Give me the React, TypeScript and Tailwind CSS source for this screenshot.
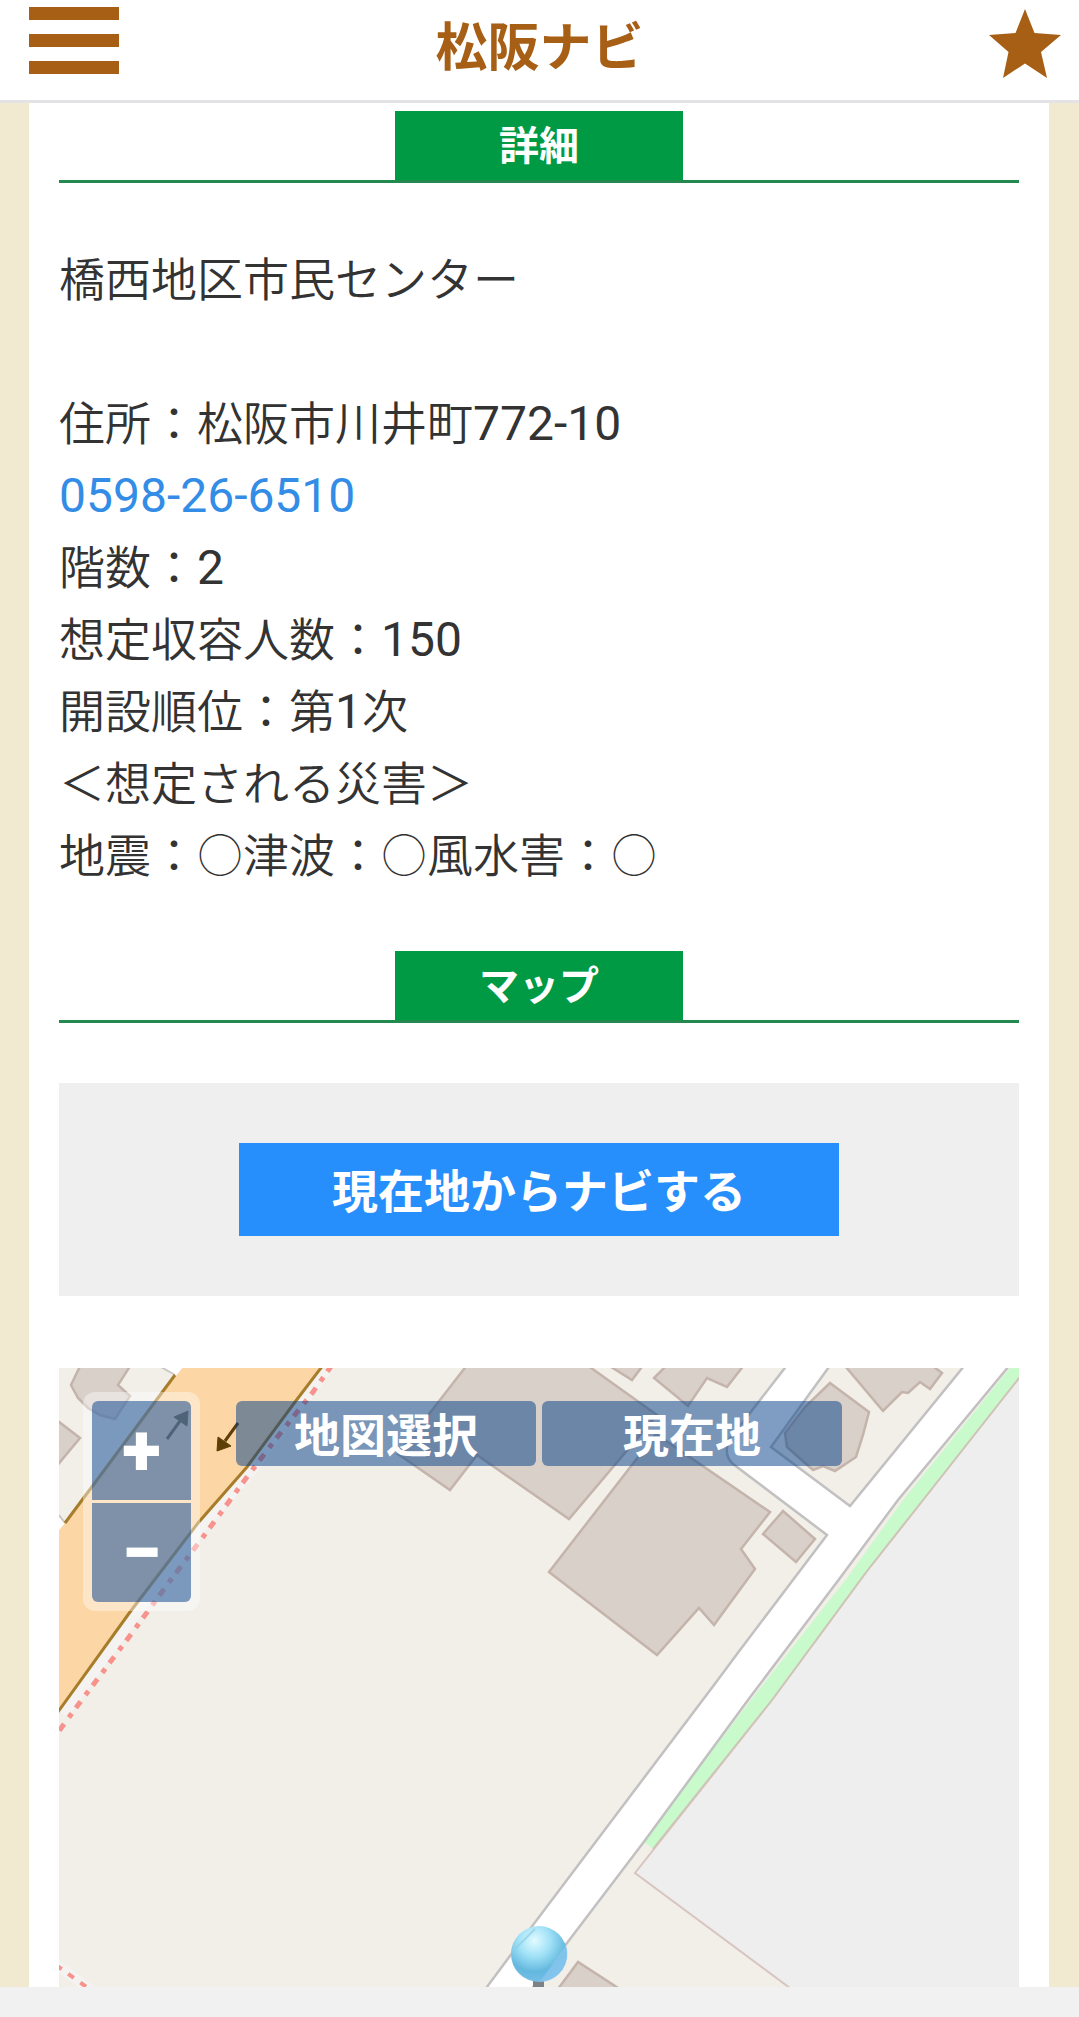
import React from "react";

const buildings = [
  "83,1360 71,1385 78,1398 88,1408 100,1415 115,1419 130,1396 118,1385 134,1360",
  "50,1415 80,1438 50,1474",
  "471,1360 398,1454 450,1490 477,1455 569,1519 657,1415 580,1360",
  "549,1572 656,1434 770,1512 741,1549 755,1569 714,1625 699,1608 657,1655",
  "783,1511 815,1539 796,1562 763,1534",
  "600,1360 632,1380 647,1360",
  "672,1360 654,1378 688,1406 707,1378 727,1387 748,1360",
  "830,1383 869,1412 863,1435 856,1457 835,1471 823,1466 813,1470 787,1447 785,1433 805,1407",
  "840,1360 883,1411 902,1392 908,1393 920,1382 930,1389 942,1373 925,1360",
  "578,1962 552,1997 632,1997",
];

function MapCanvas() {
  return (
    <svg
      className="block h-full w-full"
      viewBox="59 1368 960 619"
      preserveAspectRatio="xMidYMin slice"
      role="img"
      aria-label="周辺地図"
    >
      <defs>
        <radialGradient id="pin" cx="0.42" cy="0.26" r="0.8">
          <stop offset="0" stopColor="#e2fbff" />
          <stop offset="0.35" stopColor="#a2e2f7" />
          <stop offset="0.7" stopColor="#63b8de" />
          <stop offset="1" stopColor="#7cc0ea" />
        </radialGradient>
      </defs>
      <rect x="50" y="1360" width="980" height="640" fill="#f2efe9" />

      {/* open ground east of the road */}
      <path
        d="M1030 1364 L923 1500 L867 1571 L772 1700 L635 1873 L802 1997 L1030 1997 Z"
        fill="#eeeeee"
        stroke="#d8c4c0"
        strokeWidth="2"
      />
      <path
        d="M1010 1368 L1030 1350 L1030 1364 L923 1500 L867 1571 L772 1700 L653 1849 L643 1841 L751 1700 L847 1578 L903 1500 Z"
        fill="#c8facc"
      />
      <path d="M1030 1364 L923 1500 L867 1571 L772 1700 L653 1849" fill="none" stroke="#cfc4b6" strokeWidth="2" />

      {buildings.map((points) => (
        <polygon key={points} points={points} fill="#d9d0c9" stroke="#c4b4ab" strokeWidth="2.5" />
      ))}

      {/* side street and main street */}
      <path
        d="M969 1360 L850 1506 L771 1447 L834 1360 L791 1360 L750 1413 L729 1440 Q723 1455 733 1464 L827 1535 L740 1650 L714 1685 L533 1925 L478 1999 L524 1999 L567 1943 L643 1843 L748 1700 L837 1582 L898 1500 L1014 1360 Z"
        fill="#ffffff"
        stroke="#c2c0c1"
        strokeWidth="2.5"
      />

      {/* trunk road */}
      <path d="M321 1368 L295 1402 L247 1467 L198 1523 L130 1612 L59 1711" fill="none" stroke="#f5f3f1" strokeWidth="22" />
      <path d="M150 1360 L195 1360 L175 1377 L161 1367 Z M50 1508 L65 1523 L50 1550 Z" fill="#ffffff" />
      <path d="M189 1360 L327 1360 L295 1402 L247 1467 L198 1523 L130 1612 L50 1723 L50 1541 L65 1523 L175 1377 Z" fill="#fcd6a4" />
      <path d="M161 1367 L175 1375 M59 1515 L65 1523" stroke="#cbc7c5" strokeWidth="2" />
      <path
        d="M175 1375 L65 1523 M327 1360 L295 1402 L247 1467 L198 1523 L130 1612 L50 1723"
        fill="none"
        stroke="#a77d2b"
        strokeWidth="3"
      />
      <path
        d="M332 1365 L313 1392 L275 1440 L247 1477 L203 1537 L167 1585 L132 1633 L78 1705 L56 1735"
        fill="none"
        stroke="#f7928d"
        strokeWidth="5"
        strokeDasharray="8 7 5 8"
      />
      <path d="M56 1964 L92 1991" fill="none" stroke="#f5f3f1" strokeWidth="10" />
      <path d="M56 1965 L92 1991" fill="none" stroke="#f7928d" strokeWidth="4" strokeDasharray="7 8" />
      <g fill="#5e3f05" stroke="#5e3f05">
        <path d="M238 1423 L225 1441 M167 1439 L180 1421" strokeWidth="3" />
        <path d="M217 1451 L218 1437 L231 1446 Z M188 1411 L174 1417 L187 1426 Z" strokeWidth="1" />
      </g>

      {/* location pin */}
      <rect x="533" y="1980" width="11" height="12" fill="#7c8288" />
      <circle cx="539" cy="1954" r="28" fill="url(#pin)" />
      <path d="M540 1982 L566 1945 A28 28 0 0 1 540 1982 Z" fill="#8cc8f0" opacity="0.7" />
      <path d="M513 1951 L535 1929" stroke="#8fcfe3" strokeWidth="2" opacity="0.7" />
    </svg>
  );
}

function SectionHeading({ children }: { children: React.ReactNode }) {
  return (
    <div className="border-b-3 border-[#23894f]">
      <h2 className="mx-auto h-[69px] w-[30%] bg-[#009944] text-center text-[40px] leading-[72px] font-bold text-white">
        {children}
      </h2>
    </div>
  );
}

function Num({ children }: { children: React.ReactNode }) {
  return <span className="text-[48px] font-normal">{children}</span>;
}

function Circle() {
  return <span className="font-thin">〇</span>;
}

const mapButton =
  "h-[65px] w-[300px] rounded-md bg-[#003c88]/50 pt-1 text-[46px] leading-none font-bold text-white";

export default function App() {
  return (
    <div className="bg-[#f1e9d0] font-['Roboto','Noto_Sans_CJK_JP',sans-serif] text-[#333333]">
      <header className="grid h-[103px] grid-cols-[1fr_auto_1fr] items-start border-b-3 border-[#e3e3e5] bg-white text-[#a65f15]">
        <button type="button" aria-label="メニュー" className="mt-[7px] ml-[29px] flex w-[90px] flex-col gap-[14px]">
          <span className="h-[13px] w-full bg-[#a65f15]" />
          <span className="h-[13px] w-full bg-[#a65f15]" />
          <span className="h-[13px] w-full bg-[#a65f15]" />
        </button>
        <h1 className="text-[52px] leading-[98px] font-bold">松阪ナビ</h1>
        <button type="button" aria-label="お気に入り" className="mt-[9px] mr-[18px] justify-self-end">
          <svg className="block h-[69px] w-[72px]" viewBox="0 0 72 69" fill="#a65f15">
            <path d="M36 0 L45.500 24 L72 26 L52 43 L58 69 L36 54.500 L14 69 L19.500 43 L0 26 L26.500 24 Z" />
          </svg>
        </button>
      </header>

      <main className="mr-[30px] ml-[29px] bg-white px-[30px] pt-2">
        <SectionHeading>詳細</SectionHeading>
        <div className="mt-[61px] mb-[59px] text-[46px] leading-[72px] [font-weight:350] *:h-[72px]">
          <p>橋西地区市民センター</p>
          <p className="mt-[72px]">
            住所：松阪市川井町<Num>772-10</Num>
          </p>
          <p>
            <a href="tel:0598-26-6510" className="text-[#338de6]">
              <Num>0598-26-6510</Num>
            </a>
          </p>
          <p>
            階数：<Num>2</Num>
          </p>
          <p>
            想定収容人数：<Num>150</Num>
          </p>
          <p>
            開設順位：第<Num>1</Num>次
          </p>
          <p>＜想定される災害＞</p>
          <p>
            地震：<Circle />津波：<Circle />風水害：<Circle />
          </p>
        </div>

        <SectionHeading>マップ</SectionHeading>
        <div className="mt-[60px] bg-[#efefef] py-[60px]">
          <button
            type="button"
            className="mx-auto block h-[93px] w-[600px] bg-[#268ffc] pt-1 text-[46px] leading-none font-bold text-white"
          >
            現在地からナビする
          </button>
        </div>

        <section aria-label="地図" className="relative mt-[72px] h-[619px] overflow-hidden">
          <MapCanvas />
          <div className="absolute top-6 left-6 flex flex-col gap-[3px] rounded-xl bg-white/40 p-[9px] text-[72px] font-black text-white">
            <button type="button" aria-label="拡大" className="size-[99px] rounded-t-md bg-[#003c88]/50 leading-[99px]">
              +
            </button>
            <button type="button" aria-label="縮小" className="size-[99px] rounded-b-md bg-[#003c88]/50 leading-[99px]">
              −
            </button>
          </div>
          <div className="absolute inset-x-0 top-[33px] mx-auto flex w-fit gap-1.5">
            <button type="button" className={mapButton}>
              地図選択
            </button>
            <button type="button" className={mapButton}>
              現在地
            </button>
          </div>
        </section>
      </main>
      <footer className="h-[30px] bg-[#f1f1f1]" />
    </div>
  );
}
